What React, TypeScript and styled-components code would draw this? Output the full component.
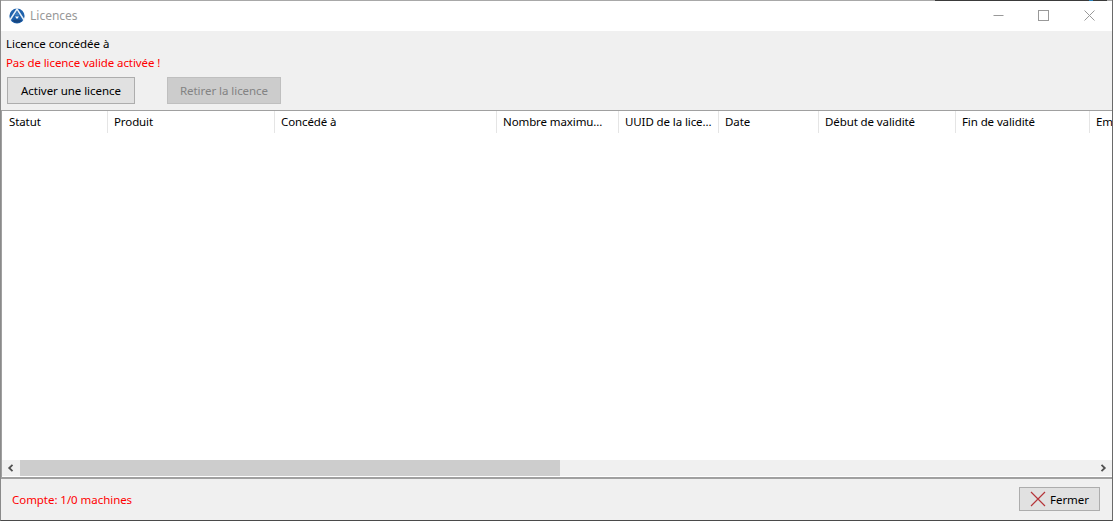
import React from "react";
import styled, { createGlobalStyle } from "styled-components";

const Global = createGlobalStyle`
  html, body { margin: 0; padding: 0; background: #fff; overflow: hidden; }
  * { box-sizing: border-box; }
`;

const Win = styled.div`
  width: 1113px;
  height: 521px;
  display: flex;
  flex-direction: column;
  background: #f0f0f0;
  border-left: 1px solid #8a8a8a;
  border-right: 1px solid #6a6a6a;
  border-bottom: 1px solid #4a4a4a;
  font-family: "Noto Sans", "Open Sans", sans-serif;
  font-size: 11.5px;
  color: #000;
  overflow: hidden;
`;

const TopEdge = styled.div`
  height: 1px;
  flex: none;
  background: linear-gradient(
    to right,
    #a8a8a8 0,
    #a8a8a8 934px,
    #3a3a3a 934px,
    #3a3a3a 1088px,
    #2a80b8 1088px,
    #2a80b8 1092px,
    #3a3a3a 1092px,
    #3a3a3a 1106px,
    #a8a8a8 1106px
  );
`;

const TitleBar = styled.div`
  height: 30px;
  flex: none;
  background: #fff;
  display: flex;
  align-items: center;
  padding-left: 8px;
  color: #999;
`;

const TitleText = styled.span`
  margin-left: 5px;
  margin-top: -2px;
  font-size: 12px;
`;

const Spacer = styled.div`
  flex: 1;
`;

const WinBtn = styled.div<{ $w: number }>`
  width: ${(p) => p.$w}px;
  height: 30px;
  padding-bottom: 1px;
  display: flex;
  align-items: center;
  justify-content: center;
`;

const Top = styled.div`
  height: 79px;
  flex: none;
  padding: 5px 5px 0;
  display: flex;
  flex-direction: column;
`;

const Line = styled.div<{ $red?: boolean }>`
  height: 19px;
  line-height: 16px;
  color: ${(p) => (p.$red ? "#ff0000" : "#000")};
  letter-spacing: ${(p) => (p.$red ? "-0.1px" : "-0.05px")};
`;

const Buttons = styled.div`
  display: flex;
  gap: 32px;
  margin-top: 3px;
  padding-left: 1px;
`;

const Btn = styled.div<{ $disabled?: boolean; $w: number }>`
  width: ${(p) => p.$w}px;
  height: 27px;
  display: flex;
  align-items: center;
  justify-content: center;
  gap: 4px;
  letter-spacing: -0.05px;
  background: ${(p) => (p.$disabled ? "#cccccc" : "#e1e1e1")};
  border: 1px solid ${(p) => (p.$disabled ? "#bfbfbf" : "#adadad")};
  color: ${(p) => (p.$disabled ? "#838383" : "#000")};
`;

const CloseBtn = styled(Btn)`
  height: 24px;
  margin-right: 1px;
  margin-top: -1px;
`;

const Table = styled.div`
  flex: 1;
  min-height: 0;
  display: flex;
  flex-direction: column;
  background: #fff;
  border-top: 1px solid #a0a0a0;
  border-left: 1px solid #a0a0a0;
`;

const Header = styled.div`
  height: 22px;
  flex: none;
  display: flex;
  overflow: hidden;
`;

const Col = styled.div<{ $w: number }>`
  width: ${(p) => p.$w}px;
  flex: none;
  padding-left: 6px;
  line-height: 21px;
  letter-spacing: -0.1px;
  border-right: 1px solid #e5e5e5;
  white-space: nowrap;
  overflow: hidden;
`;

const FirstCol = styled(Col)`
  padding-left: 7px;
`;

const Rows = styled.div`
  flex: 1;
`;

const ScrollBar = styled.div`
  height: 17px;
  flex: none;
  display: flex;
  align-items: stretch;
  background: #f0f0f0;
  border-bottom: 1px solid #fff;
`;

const Arrow = styled.div`
  width: 18px;
  flex: none;
  display: flex;
  align-items: center;
  justify-content: center;
`;

const Track = styled.div`
  flex: 1;
  display: flex;
`;

const Thumb = styled.div`
  width: 540px;
  background: #cdcdcd;
`;

const Footer = styled.div`
  height: 43px;
  flex: none;
  border-top: 2px solid #a0a0a0;
  display: flex;
  align-items: center;
  justify-content: space-between;
  padding: 0 11px;
  color: #ff0000;
`;

const Count = styled.span`
  letter-spacing: -0.05px;
`;

const columns: [string, number][] = [
  ["Produit", 167],
  ["Concédé à", 222],
  ["Nombre maximu...", 122],
  ["UUID de la lice...", 100],
  ["Date", 100],
  ["Début de validité", 137],
  ["Fin de validité", 134],
  ["Em", 40],
];

const Logo = () => (
  <svg width="16" height="16" viewBox="0 0 16 16">
    <circle cx="8" cy="8" r="7.6" fill="#1f62ac" />
    <path d="M1 12 L8 1 L15 12" fill="none" stroke="#e8f0f8" strokeWidth="1.5" />
    <path d="M8 3.4 L10.6 7.6 L5.4 7.6 Z" fill="#3f7fc0" />
    <path d="M6 8.6 L10 8.6 L8 11 Z" fill="#fff" />
    <path d="M3 12.4 Q8 10.4 13 12.4 Q8 17 3 12.4 Z" fill="#17457f" />
  </svg>
);

export default function App() {
  return (
    <Win>
      <Global />
      <TopEdge />
      <TitleBar>
        <Logo />
        <TitleText>Licences</TitleText>
        <Spacer />
        <WinBtn $w={45}>
          <svg width="11" height="11" viewBox="0 0 11 11">
            <path d="M0.5 5.5H10.5" stroke="#999" />
          </svg>
        </WinBtn>
        <WinBtn $w={45}>
          <svg width="11" height="11" viewBox="0 0 11 11">
            <rect x="0.5" y="0.5" width="10" height="10" fill="none" stroke="#999" />
          </svg>
        </WinBtn>
        <WinBtn $w={46}>
          <svg width="11" height="11" viewBox="0 0 11 11">
            <path d="M0.5 0.5L10.5 10.5M10.5 0.5L0.5 10.5" stroke="#999" />
          </svg>
        </WinBtn>
      </TitleBar>
      <Top>
        <Line>Licence concédée à</Line>
        <Line $red>Pas de licence valide activée !</Line>
        <Buttons>
          <Btn $w={128}>Activer une licence</Btn>
          <Btn $w={114} $disabled>
            Retirer la licence
          </Btn>
        </Buttons>
      </Top>
      <Table>
        <Header>
          <FirstCol $w={106}>Statut</FirstCol>
          {columns.map(([t, w]) => (
            <Col key={t} $w={w}>
              {t}
            </Col>
          ))}
        </Header>
        <Rows />
        <ScrollBar>
          <Arrow>
            <svg width="8" height="8" viewBox="0 0 8 8">
              <path d="M5.5 0.8L2.2 4L5.5 7.2" fill="none" stroke="#505050" strokeWidth="1.8" />
            </svg>
          </Arrow>
          <Track>
            <Thumb />
          </Track>
          <Arrow>
            <svg width="8" height="8" viewBox="0 0 8 8">
              <path d="M2.5 0.8L5.8 4L2.5 7.2" fill="none" stroke="#505050" strokeWidth="1.8" />
            </svg>
          </Arrow>
        </ScrollBar>
      </Table>
      <Footer>
        <Count>Compte: 1/0 machines</Count>
        <CloseBtn $w={81}>
          <svg width="16" height="16" viewBox="0 0 16 16">
            <path d="M1 1L15 15M15 1L1 15" stroke="#b5353a" strokeWidth="1.2" />
          </svg>
          Fermer
        </CloseBtn>
      </Footer>
    </Win>
  );
}
